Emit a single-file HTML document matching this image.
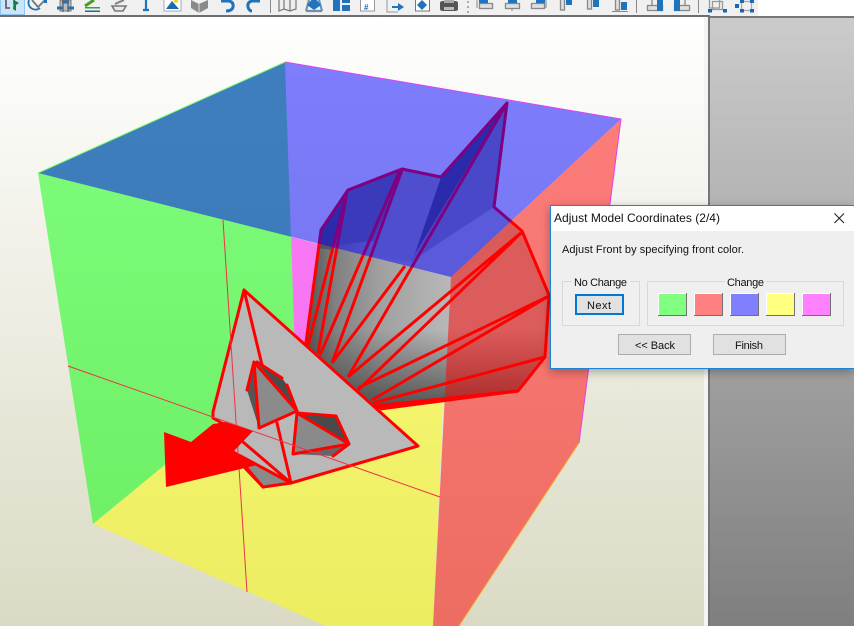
<!DOCTYPE html>
<html><head><meta charset="utf-8"><style>
html,body{margin:0;padding:0;background:#fff;width:854px;height:626px;overflow:hidden}
#r{position:relative;width:854px;height:626px;overflow:hidden;background:#fff}
.a{position:absolute;left:0;top:0;display:block}
#bg{position:absolute;left:0;top:17px;width:704px;height:609px;background:linear-gradient(#fff,#dadac4)}
#strip{position:absolute;left:704px;top:17px;width:4px;height:609px;background:#f4f4f4}
#pl{position:absolute;left:708px;top:16px;width:146px;height:610px;background:linear-gradient(#cbcbcb,#7f7f7f);border-left:2px solid #777;border-top:2px solid #777;box-sizing:border-box}
#fan{position:absolute;left:0;top:0;width:704px;height:626px;
background:linear-gradient(to bottom,rgba(70,70,70,0) 330px,rgba(70,70,70,.85) 405px),linear-gradient(to right,#505050 305px,#808080 335px,#a0a0a0 380px,#b8b8b8 450px);
clip-path:polygon(305px 350px,321px 230px,348px 190px,402px 169px,441px 177px,507px 103px,494px 207px,522px 231px,549px 295px,545px 357px,518px 391px,373px 410px,330px 400px,295px 350px)}
#dlg{position:absolute;left:550px;top:205px;width:304px;height:164px;box-sizing:border-box;border:1px solid #1a85d8;border-right:0;background:#efefef;box-shadow:0 3px 9px rgba(0,0,0,.3)}
#tb{position:absolute;left:0;top:0;width:758px;height:16px;background:#f0f0f0}
#tl{position:absolute;left:0;top:15px;width:710px;height:2px;background:#6e6e6e}
</style></head><body><div id="r">
<div id="bg"></div><div id="strip"></div><div id="pl"></div>

<svg class="a" width="704" height="626" viewBox="0 0 704 626">
<polygon points="38,173 285,62 295,358 93,524" fill="#00ff00" fill-opacity=".5"/>
<polygon points="291,237 451,277 443,402 295,358" fill="#ff00ff" fill-opacity=".5"/>
<polygon points="93,524 295,358 443,402 433,626 326,626" fill="#ffff00" fill-opacity=".5"/>
</svg>

<div id="fan"></div>

<svg class="a" width="704" height="626" viewBox="0 0 704 626">
<g stroke="none">
<polygon points="321,230 347,192 333,250 318,248" fill="#555"/>
<polygon points="441,177 507,103 425,240 412,262" fill="#545454"/>
<polygon points="347,192 402,169 380,240 338,245" fill="#747474"/>
<polygon points="402,169 441,177 412,262 368,256" fill="#9c9c9c"/>
<polygon points="507,103 494,207 410,262" fill="#909090"/>
<polygon points="494,207 522,231 451,277 410,265" fill="#b4b4b4"/>
</g>
<g fill="none" stroke="#f00" stroke-width="3" stroke-linejoin="round">
<polygon points="305,350 321,230 348,190 402,169 441,177 507,103 494,207 522,231 549,295 545,357 518,391 373,408"/>
<path d="M308,346L347,192M318,353L347,192M320,355L400,170M332,363L402,170M332,363L405,266M348,377L507,103M348,377L522,232M358,390L522,232M358,388L549,296M372,400L549,296M373,403L545,357M373,406L518,391M380,409L518,391"/>
</g>
</svg>

<svg class="a" width="704" height="626" viewBox="0 0 704 626">
<polygon points="38,173 285,62 621,119 451,277" fill="#0000ff" fill-opacity=".5"/>
<polygon points="451,277 621,119 579,443 459,626 433,626" fill="#ff0000" fill-opacity=".5"/>
<path d="M38,173L285,62" stroke="#80ff70" stroke-width="1" fill="none"/>
<path d="M285,62L621,119L579,443" stroke="#e040f0" stroke-width="1" fill="none"/>
<path d="M579,443L459,626" stroke="#f8b030" stroke-width="1" fill="none"/>

<!-- front model -->
<polygon points="244,290 418,446 291,483 263,487 233,452 225,425 213,418 213,412" fill="#b9b9b9"/>
<polygon points="254,362 247,390 259,428 262,400" fill="#555"/>
<polygon points="254,362 297,411 259,428" fill="#8b8b8b"/>
<polygon points="258,364 282,378 287,385 297,410" fill="#4a4a4a"/>
<polygon points="297,413 349,444 293,454" fill="#8a8a8a"/>
<polygon points="299,414 336,416 349,443" fill="#4a4a4a"/>
<polygon points="293,454 349,445 333,456" fill="#666"/>
<polygon points="238,457 288,482 263,487 245,468" fill="#8a8a8a"/>
<g fill="none" stroke="#f00" stroke-width="3" stroke-linejoin="round" stroke-linecap="round">
<polygon points="244,290 418,446 291,483 263,487 233,452 225,425 213,418 213,412"/>
<path d="M244,290L262,365"/>
<path d="M247,390L254,362L259,428L297,411L254,362"/>
<path d="M257,362L282,378M287,385L297,411"/>
<path d="M297,413L336,416L349,444L333,456M297,413L349,444L293,454L297,413"/>
<path d="M277,423L291,483"/>
<path d="M243,442L291,483M233,452L291,483M245,468L263,487"/>
</g>
<g fill="none" stroke="#ee3344" stroke-width="1">
<path d="M223,220L247,592"/>
<path d="M68,366L440,497"/>
</g>
<polygon points="164,432 191,442 213,424 225,422 253,431 233,452 257,465 166,487" fill="#f00"/>
</svg>

<div id="tb"></div><div id="tl"></div>
<svg class="a" width="758" height="15" viewBox="0 0 758 15">
<rect x=".5" y="-2" width="24" height="16.500" fill="#cce4f7" stroke="#8ec5ef"/>
<path d="M6,0V8H10M14,0V4" fill="none" stroke="#555" stroke-width="1.600"/>
<path d="M14,0L19,3L16,5V11L13,9Z" fill="#108040"/>
<path d="M29,0A7,7 0 0 0 40,8" fill="none" stroke="#2070b8" stroke-width="1.800"/>
<path d="M32,0L38,7L45,0" fill="#f4f4f4" stroke="#777" stroke-width="1.800"/>
<rect x="44" y="0" width="3" height="3" fill="#2070b8"/>
<rect x="60" y="0" width="11" height="11" fill="#bbb" stroke="#777"/>
<path d="M57,8H63M68,8H74M62,2H69" stroke="#1a72bb" stroke-width="3" fill="none"/>
<path d="M63,0V12M68,0V12" stroke="#666" stroke-width="1.400"/>
<path d="M85,6L94,0" stroke="#4a9d28" stroke-width="3"/>
<rect x="85" y="7" width="15" height="1.500" fill="#4a9d28"/><rect x="85" y="10.500" width="15" height="1.500" fill="#1a68b0"/>
<path d="M112,6H126L123,11H115Z" fill="#e8e8e8" stroke="#777" stroke-width="1.600"/>
<path d="M115,4L124,0" stroke="#888" stroke-width="2.200"/>
<path d="M146,0V10M143,10H149" stroke="#1f74bd" stroke-width="2.200"/>
<rect x="164" y="-2" width="17" height="13" fill="#fff" stroke="#aaa"/>
<path d="M166,9L172,1L179,9Z" fill="#1a68b0"/><circle cx="176" cy="1" r="2" fill="#e8d820"/>
<path d="M191,0L199,4L208,0V8L199,13L191,8Z" fill="#8a8a8a"/><path d="M199,4V13" stroke="#ddd"/>
<path d="M221,1H229Q234,2 233,7Q232,11 226,11" fill="none" stroke="#1f74bd" stroke-width="3"/>
<path d="M260,1H252Q247,2 248,7Q249,11 252,11" fill="none" stroke="#1f74bd" stroke-width="3"/>
<rect x="270" y="0" width="1" height="13" fill="#888"/>
<path d="M279,0V11L284,9L290,11L296,9V0M284,0V9M290,0V11" fill="#eee" stroke="#777" stroke-width="1.200"/>
<path d="M306,11L309,0M322,11L319,0M306,11H322" fill="none" stroke="#6e90b0" stroke-width="2.200"/>
<path d="M314,-3L321,5L314,10L307,5Z" fill="#1f74bd"/>
<rect x="333" y="0" width="7" height="11" fill="#1f74bd"/><rect x="342" y="0" width="8" height="3" fill="#1f74bd"/><rect x="342" y="5" width="8" height="6" fill="#1f74bd"/>
<rect x="360.500" y="-2" width="14" height="13" fill="#fff" stroke="#999"/>
<text x="364" y="10" font-family="Liberation Sans" font-size="8" font-weight="bold" fill="#1a68b0">#</text>
<path d="M387,0V12H398" fill="none" stroke="#999"/>
<path d="M392,6H398V3L404,7L398,11V8H392Z" fill="#1f74bd"/>
<rect x="415.500" y="-2" width="14" height="13" fill="#fff" stroke="#777"/>
<path d="M422,0L427,5L422,10L417,5Z" fill="#1f74bd"/>
<path d="M440,3Q440,1 443,1H455Q458,1 458,3V9Q458,11 455,11H443Q440,11 440,9Z" fill="#555"/>
<rect x="444" y="0" width="10" height="3" fill="#aaa"/><rect x="444" y="7" width="10" height="3" fill="#bbb"/>
<g fill="#aaa"><rect x="467" y="1" width="2" height="2"/><rect x="467" y="6" width="2" height="2"/><rect x="467" y="11" width="2" height="2"/></g>
<path d="M477,0V8" stroke="#888"/><rect x="479.500" y="3.500" width="13" height="5" fill="#e0e0e0" stroke="#888" stroke-width="1.300"/><rect x="479" y="0" width="9" height="3" fill="#1f74bd"/>
<path d="M512,0V11" stroke="#888"/><rect x="505.500" y="3.500" width="14" height="5" fill="#e0e0e0" stroke="#888" stroke-width="1.300"/><rect x="508" y="0" width="9" height="3" fill="#1f74bd"/>
<path d="M546,0V8" stroke="#888"/><rect x="531.500" y="3.500" width="13" height="5" fill="#e0e0e0" stroke="#888" stroke-width="1.300"/><rect x="536" y="0" width="9" height="3" fill="#1f74bd"/>
<rect x="560.500" y="-1" width="4" height="11" fill="#e0e0e0" stroke="#888" stroke-width="1.300"/><rect x="566" y="0" width="6" height="5" fill="#1f74bd"/>
<rect x="587.500" y="-1" width="4" height="10" fill="#e0e0e0" stroke="#888" stroke-width="1.300"/><rect x="593" y="0" width="6" height="7" fill="#1f74bd"/>
<rect x="615.500" y="-1" width="4" height="11" fill="#e0e0e0" stroke="#888" stroke-width="1.300"/><rect x="621" y="2" width="6" height="8" fill="#1f74bd"/><path d="M612,11.500H628" stroke="#888"/>
<rect x="636" y="0" width="1" height="13" fill="#888"/>
<rect x="647.500" y="5.500" width="15" height="5" fill="#e0e0e0" stroke="#888" stroke-width="1.300"/><rect x="657" y="0" width="6" height="11" fill="#1f74bd"/><path d="M652,0V5" stroke="#666"/>
<rect x="674.500" y="5.500" width="15" height="5" fill="#e0e0e0" stroke="#888" stroke-width="1.300"/><rect x="674" y="0" width="6" height="11" fill="#1f74bd"/><path d="M685,0V5" stroke="#666"/>
<rect x="698" y="0" width="1" height="13" fill="#888"/>
<rect x="709.500" y="-1" width="10" height="9" fill="none" stroke="#999" stroke-width="1.300"/><rect x="712.500" y="1.500" width="10" height="8" fill="none" stroke="#999" stroke-width="1.300"/>
<rect x="708" y="9" width="4" height="3.500" fill="#1a68b0"/><rect x="723" y="9" width="4" height="3.500" fill="#1a68b0"/>
<rect x="741.500" y="1.500" width="10" height="9" fill="none" stroke="#aaa" stroke-width="1.300"/>
<g fill="#1a68b0"><rect x="740" y="0" width="4" height="3"/><rect x="750" y="0" width="4" height="3"/><rect x="740" y="9" width="4" height="3.500"/><rect x="750" y="9" width="4" height="3.500"/><rect x="735" y="4" width="4" height="4"/></g>
</svg>

<div id="dlg"></div>
<svg class="a" width="854" height="626" viewBox="0 0 854 626" style="pointer-events:none">
<rect x="551" y="206" width="303" height="25" fill="#fff"/>
<path d="M834.500,213.500L844,223M844,213.500L834.500,223" stroke="#222" stroke-width="1.100" fill="none"/>
<g font-family="Liberation Sans" font-size="12" fill="#111">
<text x="554" y="222" textLength="166" lengthAdjust="spacing">Adjust Model Coordinates (2/4)</text>
</g>
<g font-family="Liberation Sans" font-size="11" fill="#111">
<text x="562" y="253" textLength="182" lengthAdjust="spacing">Adjust Front by specifying front color.</text>
</g>
<g fill="none" stroke="#d8d8d8">
<rect x="562.500" y="281.500" width="77" height="44"/>
<rect x="647.500" y="281.500" width="196" height="44"/>
</g>
<rect x="572" y="276" width="58" height="12" fill="#efefef"/>
<rect x="725" y="276" width="41" height="12" fill="#efefef"/>
<g font-family="Liberation Sans" font-size="11" fill="#111">
<text x="574" y="286" textLength="53" lengthAdjust="spacing">No Change</text>
<text x="727" y="286" textLength="37" lengthAdjust="spacing">Change</text>
</g>
<rect x="576" y="295" width="47" height="19" fill="#e1e1e1" stroke="#0078d7" stroke-width="2"/>
<text x="587" y="309" font-family="Liberation Sans" font-size="11" fill="#111" textLength="24" lengthAdjust="spacing">Next</text>
<g stroke="none">
<rect x="658" y="293" width="29" height="23" fill="#707070"/><rect x="658" y="293" width="28" height="22" fill="#fff"/><rect x="659" y="294" width="27" height="21" fill="#80ff80"/>
<rect x="694" y="293" width="29" height="23" fill="#707070"/><rect x="694" y="293" width="28" height="22" fill="#fff"/><rect x="695" y="294" width="27" height="21" fill="#ff8080"/>
<rect x="730" y="293" width="29" height="23" fill="#707070"/><rect x="730" y="293" width="28" height="22" fill="#fff"/><rect x="731" y="294" width="27" height="21" fill="#8080ff"/>
<rect x="766" y="293" width="29" height="23" fill="#707070"/><rect x="766" y="293" width="28" height="22" fill="#fff"/><rect x="767" y="294" width="27" height="21" fill="#ffff80"/>
<rect x="802" y="293" width="29" height="23" fill="#707070"/><rect x="802" y="293" width="28" height="22" fill="#fff"/><rect x="803" y="294" width="27" height="21" fill="#ff80ff"/>
</g>
<rect x="618.500" y="334.500" width="72" height="20" fill="#e1e1e1" stroke="#adadad"/>
<rect x="713.500" y="334.500" width="72" height="20" fill="#e1e1e1" stroke="#adadad"/>
<g font-family="Liberation Sans" font-size="11" fill="#111">
<text x="635" y="349" textLength="40" lengthAdjust="spacing">&lt;&lt; Back</text>
<text x="735" y="349" textLength="28" lengthAdjust="spacing">Finish</text>
</g>
</svg>
</div></body></html>
